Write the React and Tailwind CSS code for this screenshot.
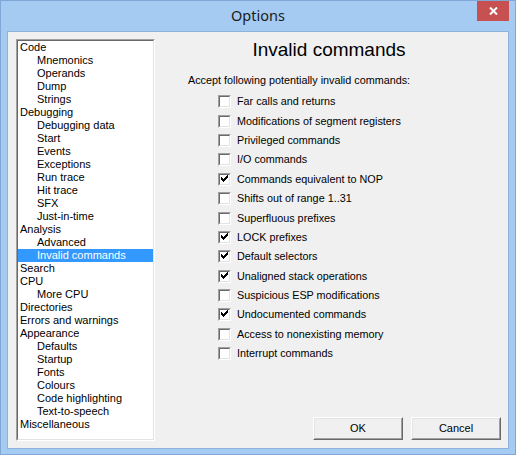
import React from "react";

const tree = [
  ["Code", 0], ["Mnemonics", 1], ["Operands", 1], ["Dump", 1], ["Strings", 1],
  ["Debugging", 0], ["Debugging data", 1], ["Start", 1], ["Events", 1], ["Exceptions", 1],
  ["Run trace", 1], ["Hit trace", 1], ["SFX", 1], ["Just-in-time", 1],
  ["Analysis", 0], ["Advanced", 1], ["Invalid commands", 1, true],
  ["Search", 0], ["CPU", 0], ["More CPU", 1], ["Directories", 0], ["Errors and warnings", 0],
  ["Appearance", 0], ["Defaults", 1], ["Startup", 1], ["Fonts", 1], ["Colours", 1],
  ["Code highlighting", 1], ["Text-to-speech", 1], ["Miscellaneous", 0],
];

const opts = [
  ["Far calls and returns", false],
  ["Modifications of segment registers", false],
  ["Privileged commands", false],
  ["I/O commands", false],
  ["Commands equivalent to NOP", true],
  ["Shifts out of range 1..31", false],
  ["Superfluous prefixes", false],
  ["LOCK prefixes", true],
  ["Default selectors", true],
  ["Unaligned stack operations", true],
  ["Suspicious ESP modifications", false],
  ["Undocumented commands", true],
  ["Access to nonexisting memory", false],
  ["Interrupt commands", false],
];

const checkCols = [3, 4, 5, 4, 3, 2, 1];

function Check({ on }) {
  return (
    <div className="w-[13px] h-[13px] shrink-0 border-t border-l border-t-[#a0a0a0] border-l-[#a0a0a0] border-b border-r border-b-white border-r-white">
      <div className="w-full h-full border-t border-l border-t-[#696969] border-l-[#696969] border-b border-r border-b-[#e3e3e3] border-r-[#e3e3e3] bg-white">
        {on && (
          <svg width="9" height="9" viewBox="0 0 9 9" shapeRendering="crispEdges" className="block">
            {checkCols.map((y, i) => (
              <rect key={i} x={i + 1} y={y - 1} width="1" height="3" fill="#000" />
            ))}
          </svg>
        )}
      </div>
    </div>
  );
}

function Btn({ children }) {
  return (
    <div className="w-[90px] h-[23px] border-t border-l border-t-white border-l-white border-b border-r border-b-[#696969] border-r-[#696969]">
      <div className="w-full h-full flex items-center justify-center border-b border-r border-b-[#a0a0a0] border-r-[#a0a0a0] border-t border-l border-t-[#e3e3e3] border-l-[#e3e3e3] text-[11px] text-black">
        {children}
      </div>
    </div>
  );
}

export default function App() {
  return (
    <div
      className="w-[516px] h-[455px] bg-[#a5cbf3] border border-[#7fa8d6] flex flex-col overflow-hidden"
      style={{ fontFamily: '"Liberation Sans", Arial, sans-serif' }}
    >
      <div className="h-[30px] relative flex items-start justify-center shrink-0">
        <span
          className="text-[14.5px] leading-[20px] mt-[4px] text-[#1b1b1b]"
          style={{ fontFamily: '"Noto Sans", "Open Sans", sans-serif' }}
        >
          Options
        </span>
        <div className="absolute right-[6px] top-0 w-[32px] h-[20px] bg-[#c75050] flex items-center justify-center">
          <svg width="9" height="8" viewBox="0 0 9 8">
            <path d="M1 0.5 L8 7.5 M8 0.5 L1 7.5" stroke="#fff" strokeWidth="2" />
          </svg>
        </div>
      </div>
      <div className="mx-[6px] mb-[6px] flex-1 bg-[#f0f0f0] border border-[#8db2dc] flex pl-[8px] pt-[7px] pb-[7px] pr-[7px]">
        <div className="w-[139px] h-[402px] border-t border-l border-t-[#a0a0a0] border-l-[#a0a0a0] border-b border-r border-b-white border-r-white">
          <div className="w-full h-full border-t border-l border-t-[#696969] border-l-[#696969] border-b border-r border-b-[#e3e3e3] border-r-[#e3e3e3] bg-white overflow-hidden">
            <div className="flex flex-col">
              {tree.map(([t, lvl, sel], i) => (
                <div
                  key={i}
                  className={
                    "h-[13px] leading-[13px] text-[11px] whitespace-nowrap " +
                    (sel ? "bg-[#3399ff] text-white" : "text-black")
                  }
                >
                  <span className={lvl ? "pl-[19px]" : "pl-[2px]"}>{t}</span>
                </div>
              ))}
            </div>
          </div>
        </div>
        <div className="flex-1 flex flex-col">
          <div className="h-[22px] leading-[22px] text-[19px] text-black text-center pl-[2px]">
            Invalid commands
          </div>
          <div className="mt-[13px] h-[13px] leading-[13px] text-[10.8px] text-black pl-[33px]">
            Accept following potentially invalid commands:
          </div>
          <div className="mt-[5px] flex flex-col pl-[63px]">
            {opts.map(([t, on], i) => (
              <div key={i} className="h-[19.4px] flex items-center gap-[6px]">
                <Check on={on} />
                <span className="text-[10.8px] text-black leading-[13px] whitespace-nowrap">{t}</span>
              </div>
            ))}
          </div>
          <div className="mt-auto flex justify-end gap-[8px] pb-[1px]">
            <Btn>OK</Btn>
            <Btn>Cancel</Btn>
          </div>
        </div>
      </div>
    </div>
  );
}
